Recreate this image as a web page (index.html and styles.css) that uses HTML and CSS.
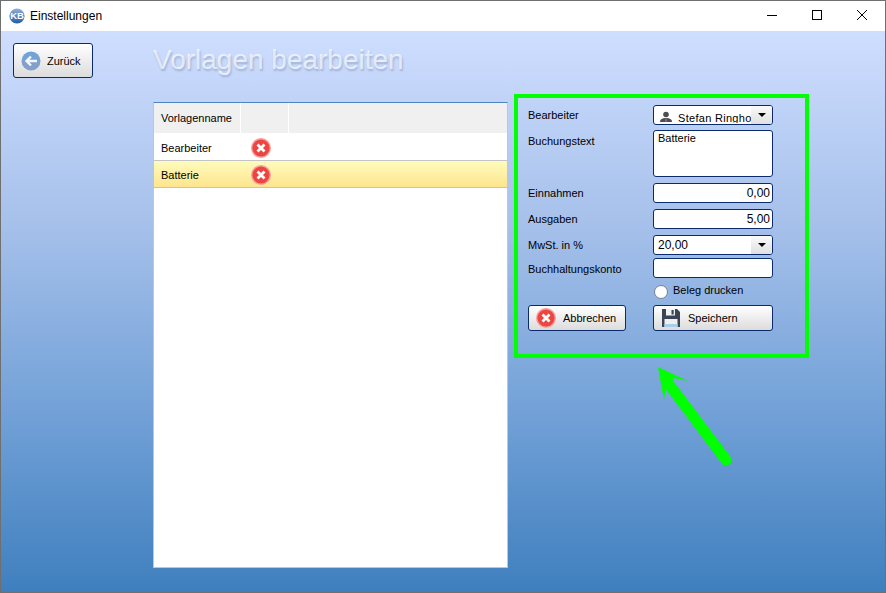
FILE: index.html
```html
<!DOCTYPE html>
<html lang="de">
<head>
<meta charset="utf-8">
<title>Einstellungen</title>
<link rel="stylesheet" href="styles.css">
</head>
<body>
<div class="window">
  <header class="titlebar">
    <svg class="app-icon" width="16" height="16" viewBox="0 0 16 16"><defs><linearGradient id="kb" x1="0" y1="0" x2="0" y2="1"><stop offset="0" stop-color="#8fb2dc"/><stop offset="1" stop-color="#1f5ea8"/></linearGradient></defs><circle cx="8" cy="8" r="7.6" fill="url(#kb)"/><text x="8" y="11.300" text-anchor="middle" class="app-icon-text">KB</text></svg>
    <span class="title">Einstellungen</span>
    <div class="caption">
      <svg width="12" height="12" viewBox="0 0 12 12"><path d="M1 6.500H11" stroke="#000" fill="none"/></svg>
      <svg width="12" height="12" viewBox="0 0 12 12"><rect x="1.500" y="1.500" width="9" height="9" stroke="#000" fill="none"/></svg>
      <svg width="12" height="12" viewBox="0 0 12 12"><path d="M1 1L11 11M11 1L1 11" stroke="#000" fill="none"/></svg>
    </div>
  </header>
  <main class="content">
    <div class="nav">
      <button class="btn back">
        <svg width="20" height="20" viewBox="0 0 20 20"><defs><linearGradient id="bk" x1="0" y1="0" x2="0" y2="1"><stop offset="0" stop-color="#6ea3dc"/><stop offset="1" stop-color="#8a9fc4"/></linearGradient></defs><circle cx="10" cy="10" r="9.500" fill="url(#bk)"/><path d="M16 10H6M10 5.500L5.500 10L10 14.500" stroke="#f4f6fa" stroke-width="2.400" fill="none"/></svg>
        Zurück
      </button>
    </div>
    <div class="body">
      <h1 class="heading">Vorlagen bearbeiten</h1>
      <div class="columns">
        <section class="table">
          <div class="thead">
            <div class="th th-name">Vorlagenname</div>
            <div class="th th-del"></div>
            <div class="th th-rest"></div>
          </div>
          <div class="row first">
            <div class="cell-name">Bearbeiter</div>
            <div class="cell-del"><svg width="20" height="20" viewBox="0 0 20 20"><circle cx="10" cy="10" r="10" fill="#f5a09b"/><circle cx="10" cy="10" r="8.600" fill="#ee4540"/><path d="M6.500 6.500L13.500 13.500M13.500 6.500L6.500 13.500" stroke="#fff" stroke-width="2.800"/></svg></div>
          </div>
          <div class="row selected">
            <div class="cell-name">Batterie</div>
            <div class="cell-del"><svg width="20" height="20" viewBox="0 0 20 20"><circle cx="10" cy="10" r="10" fill="#f5a09b"/><circle cx="10" cy="10" r="8.600" fill="#ee4540"/><path d="M6.500 6.500L13.500 13.500M13.500 6.500L6.500 13.500" stroke="#fff" stroke-width="2.800"/></svg></div>
          </div>
        </section>
        <section class="panel">
          <div class="form">
            <label class="lbl">Bearbeiter</label>
            <div class="field combo">
              <div class="combo-value person">
                <svg width="14" height="12" viewBox="0 0 14 12"><circle cx="7" cy="3.500" r="2.800" fill="#4a4f57"/><path d="M1 11C1 8 3.500 7 7 7S13 8 13 11Z" fill="#4a4f57"/><path d="M6.400 7.500H7.600V11H6.400Z" fill="#d66"/></svg>
                <span class="person-name">Stefan Ringho</span>
              </div>
              <div class="combo-arrow"><i></i></div>
            </div>
            <label class="lbl lbl-low">Buchungstext</label>
            <div class="field area">Batterie</div>
            <label class="lbl">Einnahmen</label>
            <div class="field num">0,00</div>
            <label class="lbl">Ausgaben</label>
            <div class="field num">5,00</div>
            <label class="lbl">MwSt. in %</label>
            <div class="field combo">
              <div class="combo-value">20,00</div>
              <div class="combo-arrow"><i></i></div>
            </div>
            <label class="lbl lbl-low">Buchhaltungskonto</label>
            <div class="field"></div>
            <div></div>
            <div class="check"><span class="check-box"></span><span class="check-text">Beleg drucken</span></div>
            <button class="btn action cancel">
              <svg width="20" height="20" viewBox="0 0 20 20"><circle cx="10" cy="10" r="10" fill="#f5a09b"/><circle cx="10" cy="10" r="8.600" fill="#ee4540"/><path d="M6.500 6.500L13.500 13.500M13.500 6.500L6.500 13.500" stroke="#fff" stroke-width="2.800"/></svg>
              Abbrechen
            </button>
            <button class="btn action save">
              <svg width="20" height="20" viewBox="0 0 20 20"><path d="M1 1H16L19 4V19H1Z" fill="#3b4454"/><rect x="5" y="1" width="9" height="6.500" fill="#f2f3f5"/><rect x="10.500" y="2" width="2.200" height="4.500" fill="#3b4454"/><rect x="3.500" y="11" width="13" height="8" fill="#eef1f4"/><rect x="3.500" y="16" width="13" height="3" fill="#a9cfe6"/></svg>
              Speichern
            </button>
          </div>
        </section>
      </div>
    </div>
    <svg class="arrow" width="90" height="110" viewBox="0 0 90 110"><path d="M70 94L12 17" stroke="#00ff00" stroke-width="11" stroke-linecap="round" fill="none"/><path d="M2 1L32 15L18 12L10 22L8 34Z" fill="#00ff00"/></svg>
  </main>
</div>
</body>
</html>
```
FILE: styles.css
```css
* { box-sizing: border-box; }
html, body { margin: 0; padding: 0; }
body {
  width: 886px;
  height: 593px;
  overflow: hidden;
  font-family: "Liberation Sans", Arial, sans-serif;
  font-size: 11px;
  color: #000;
}
.window {
  width: 886px;
  height: 593px;
  border: 1px solid #6f6f6f;
  display: flex;
  flex-direction: column;
  background: #fff;
}
.titlebar {
  height: 30px;
  flex: none;
  display: flex;
  align-items: center;
  padding-left: 8px;
  background: #fff;
}
.app-icon { flex: none; }
.app-icon-text { font: bold 9.5px "Liberation Sans", sans-serif; fill: #fff; }
.title { margin-left: 5px; font-size: 12px; }
.caption {
  margin-left: auto;
  display: flex;
  gap: 33px;
  padding: 0 17px 2px 0;
}
.caption svg { display: block; }
.content {
  position: relative;
  flex: 1;
  display: flex;
  background: linear-gradient(#cfdeff 0%, #a5c0ea 35%, #6f9fd6 70%, #3f7fbe 100%);
}
.nav { width: 140px; flex: none; padding: 12px 0 0 12px; }
.btn {
  display: flex;
  align-items: center;
  font: inherit;
  color: #000;
  border: 1px solid #0b2a6b;
  border-radius: 3px;
  background: linear-gradient(#ffffff, #dcdcdc);
  padding: 0;
}
.back { width: 80px; height: 35px; padding-left: 7px; gap: 6px; }
.body { flex: 1; display: flex; flex-direction: column; padding: 0 0 0 12px; }
.heading {
  margin: 0;
  height: 71px;
  padding-top: 13px;
  font: 400 28px "Liberation Sans", sans-serif;
  color: rgba(255, 255, 255, 0.68);
  text-shadow: 1px 2px 2px rgba(70, 90, 130, 0.3);
}
.columns { display: flex; align-items: flex-start; }
.table {
  width: 355px;
  height: 466px;
  background: #fff;
  border: 1px solid #a8cdec;
  border-top-color: #4d86bd;
  flex: none;
}
.thead { display: flex; height: 30px; background: #fff; gap: 1px; }
.th { background: #f0f0f0; display: flex; align-items: center; padding-left: 7px; }
.th-name { width: 86px; }
.th-del { width: 47px; }
.th-rest { flex: 1; }
.row {
  display: flex;
  align-items: center;
  height: 27px;
  padding-top: 1px;
  border-bottom: 1px solid #c4c4c4;
}
.first { height: 28px; padding-top: 2px; }
.selected { background: linear-gradient(#fffbbd, #fde58e); }
.cell-name { width: 87px; padding-left: 7px; }
.cell-del { display: flex; padding-left: 10px; }
.panel {
  width: 295px;
  height: 264px;
  margin: -8px 0 0 6px;
  border: 4px solid #00ff00;
  padding: 7px 0 0 10px;
  flex: none;
}
.form {
  display: grid;
  grid-template-columns: 125px 120px;
  grid-template-rows: 25px 53px 26px 26px 23px 27px 20px 26px;
  align-items: start;
}
.lbl { line-height: 20px; }
.lbl-low { padding-top: 1px; }
.field {
  height: 20px;
  background: #fff;
  border: 1px solid #0b2a6b;
  border-radius: 3px;
  padding: 0 2px 0 4px;
  line-height: 18px;
  overflow: hidden;
}
.area { height: 47px; line-height: 14px; }
.num { text-align: right; font-size: 12px; }
.combo { display: flex; padding: 0; }
.combo-value { flex: 1; padding-left: 4px; font-size: 12px; line-height: 19px; overflow: hidden; white-space: nowrap; }
.person { display: flex; align-items: flex-start; gap: 5px; padding: 5px 0 0 5px; font-size: 11px; }
.person svg { flex: none; }
.person-name { display: block; height: 12px; overflow: hidden; line-height: 14px; letter-spacing: 0.3px; }
.combo-arrow {
  width: 21px;
  background: linear-gradient(#fafafa, #e0e0e0);
  display: flex;
  align-items: center;
  justify-content: center;
}
.combo-arrow i {
  display: block;
  border-left: 4px solid transparent;
  border-right: 4px solid transparent;
  border-top: 4px solid #000;
}
.check { display: flex; align-items: flex-start; gap: 5px; }
.check-box {
  width: 14px;
  height: 14px;
  border-radius: 50%;
  background: #fff;
  border: 1px solid #7a8090;
  margin-left: 1px;
}
.check-text { line-height: 11px; }
.action { height: 26px; }
.cancel { width: 98px; padding-left: 7px; gap: 7px; }
.save { width: 120px; padding-left: 7px; gap: 7px; }
.arrow { position: absolute; left: 655px; top: 335px; }
```
